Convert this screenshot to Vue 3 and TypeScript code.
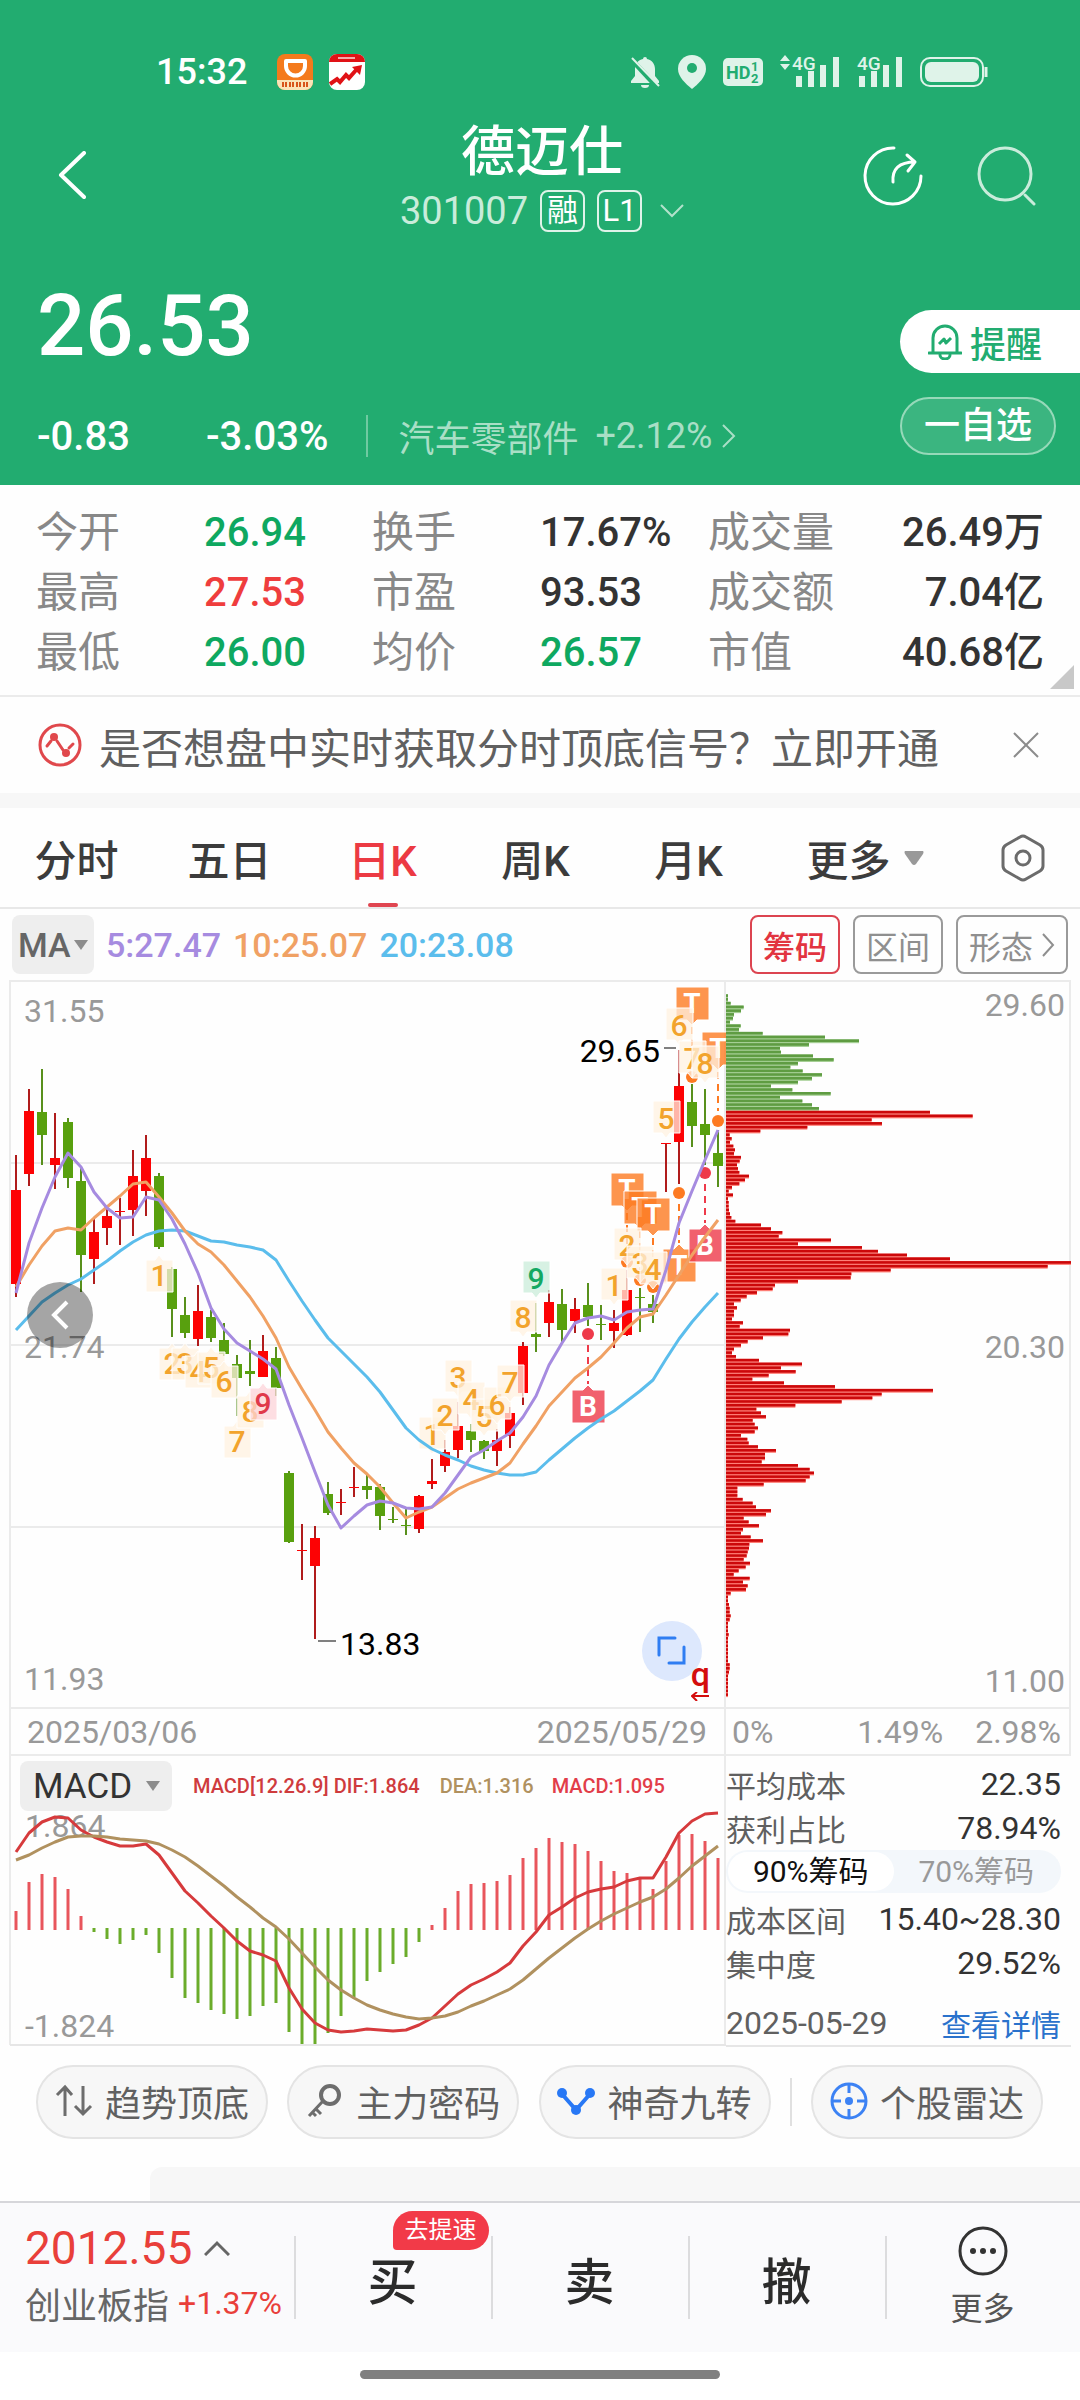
<script setup lang="ts">
import { computed, ref } from 'vue'

type Tone = 'up' | 'down' | 'flat'

interface Quote {
  label: string
  value: string
  tone: Tone
}

/* [high, body top, body bottom, low, rising] in chart units */
type Candle = [number, number, number, number, 0 | 1]

interface Count {
  i: number
  y: number
  n: number
  below?: boolean
  kind?: 'hot' | 'cool'
}

interface Trade {
  i: number
  y: number
  letter: 'T' | 'B'
  below?: boolean
  dot: number
}

const quoteRows: Quote[][] = [
  [
    { label: '今开', value: '26.94', tone: 'down' },
    { label: '换手', value: '17.67%', tone: 'flat' },
    { label: '成交量', value: '26.49万', tone: 'flat' },
  ],
  [
    { label: '最高', value: '27.53', tone: 'up' },
    { label: '市盈', value: '93.53', tone: 'flat' },
    { label: '成交额', value: '7.04亿', tone: 'flat' },
  ],
  [
    { label: '最低', value: '26.00', tone: 'down' },
    { label: '均价', value: '26.57', tone: 'down' },
    { label: '市值', value: '40.68亿', tone: 'flat' },
  ],
]

const periods = ['分时', '五日', '日K', '周K', '月K']
const activePeriod = ref('日K')
const chipRange = ref('90')

const candles: Candle[] = [
  [1155, 1190, 1284, 1297, 1], [1089, 1111, 1174, 1186, 1], [1069, 1112, 1135, 1165, 0],
  [1113, 1158, 1165, 1189, 1], [1118, 1122, 1178, 1188, 0], [1168, 1181, 1255, 1292, 0],
  [1217, 1232, 1259, 1284, 1], [1208, 1216, 1228, 1245, 1], [1198, 1211, 1212, 1245, 1],
  [1150, 1176, 1210, 1236, 1], [1135, 1158, 1191, 1216, 1], [1173, 1176, 1247, 1249, 0],
  [1267, 1269, 1309, 1337, 0], [1297, 1315, 1333, 1338, 0], [1285, 1311, 1339, 1346, 1],
  [1310, 1317, 1338, 1342, 0], [1323, 1340, 1354, 1356, 0], [1355, 1364, 1378, 1416, 0],
  [1340, 1371, 1374, 1386, 0], [1335, 1351, 1377, 1377, 1], [1347, 1358, 1388, 1396, 0],
  [1471, 1473, 1542, 1543, 0], [1524, 1550, 1551, 1580, 1], [1526, 1538, 1566, 1639, 1],
  [1482, 1494, 1513, 1515, 0], [1489, 1502, 1503, 1515, 1], [1467, 1487, 1488, 1497, 1],
  [1475, 1486, 1490, 1499, 0], [1484, 1487, 1516, 1530, 0], [1507, 1519, 1520, 1523, 0],
  [1509, 1525, 1526, 1535, 0], [1495, 1496, 1529, 1533, 1], [1459, 1481, 1484, 1489, 1],
  [1440, 1452, 1466, 1472, 1], [1402, 1426, 1450, 1458, 1], [1424, 1431, 1440, 1452, 0],
  [1440, 1441, 1451, 1459, 0], [1429, 1440, 1451, 1466, 1], [1407, 1413, 1436, 1448, 1],
  [1342, 1346, 1393, 1405, 1], [1303, 1334, 1337, 1352, 0], [1290, 1302, 1323, 1337, 1],
  [1289, 1304, 1330, 1342, 0], [1298, 1309, 1321, 1333, 1], [1283, 1305, 1317, 1326, 0],
  [1305, 1324, 1325, 1340, 0], [1310, 1323, 1331, 1348, 1], [1270, 1290, 1335, 1336, 1],
  [1288, 1297, 1298, 1332, 0], [1295, 1304, 1312, 1323, 0], [1143, 1143, 1144, 1192, 1],
  [1050, 1086, 1142, 1184, 1], [1084, 1102, 1126, 1147, 0], [1089, 1124, 1135, 1165, 0],
  [1130, 1153, 1166, 1187, 0],
]

const ma5 = [
  1293, 1243, 1208, 1177, 1153, 1167, 1192, 1208, 1218, 1217, 1197, 1200, 1219, 1244, 1273, 1308, 1329, 1343, 1351,
  1359, 1369, 1405, 1438, 1472, 1505, 1528, 1516, 1505, 1501, 1503, 1508, 1509, 1507, 1493, 1475, 1457, 1450, 1441,
  1433, 1417, 1396, 1365, 1343, 1323, 1318, 1316, 1320, 1312, 1310, 1309, 1270, 1223, 1191, 1160, 1130,
]
const ma10 = [
  1287, 1265, 1246, 1231, 1228, 1230, 1218, 1207, 1196, 1184, 1182, 1197, 1213, 1231, 1244, 1252, 1265, 1281, 1297,
  1316, 1338, 1367, 1389, 1410, 1432, 1448, 1463, 1474, 1487, 1503, 1518, 1512, 1507, 1498, 1489, 1483, 1478, 1473,
  1463, 1444, 1426, 1406, 1392, 1378, 1368, 1357, 1343, 1328, 1317, 1314, 1295, 1275, 1255, 1237, 1220,
]
const ma20 = [
  1330, 1316, 1302, 1293, 1285, 1279, 1270, 1261, 1251, 1242, 1235, 1231, 1230, 1231, 1236, 1241, 1242, 1245, 1247,
  1250, 1260, 1281, 1301, 1320, 1338, 1351, 1364, 1377, 1392, 1410, 1428, 1440, 1449, 1455, 1460, 1466, 1470, 1473,
  1475, 1475, 1472, 1460, 1449, 1438, 1428, 1419, 1411, 1401, 1391, 1380, 1359, 1339, 1322, 1307, 1293,
]

const counts: Count[] = [
  { i: 11, y: 1259, n: 1, below: true },
  { i: 12, y: 1347, n: 2, below: true },
  { i: 13, y: 1347, n: 3, below: true },
  { i: 14, y: 1355, n: 4, below: true },
  { i: 15, y: 1351, n: 5, below: true },
  { i: 16, y: 1365, n: 6, below: true },
  { i: 17, y: 1425, n: 7, below: true },
  { i: 18, y: 1395, n: 8, below: true },
  { i: 19, y: 1387, n: 9, below: true, kind: 'hot' },
  { i: 32, y: 1417, n: 1 },
  { i: 33, y: 1398, n: 2 },
  { i: 34, y: 1360, n: 3 },
  { i: 35, y: 1382, n: 4 },
  { i: 36, y: 1399, n: 5 },
  { i: 37, y: 1387, n: 6 },
  { i: 38, y: 1365, n: 7 },
  { i: 39, y: 1300, n: 8 },
  { i: 40, y: 1261, n: 9, kind: 'cool' },
  { i: 46, y: 1268, n: 1 },
  { i: 47, y: 1228, n: 2 },
  { i: 48, y: 1246, n: 3 },
  { i: 49, y: 1252, n: 4 },
  { i: 50, y: 1101, n: 5 },
  { i: 51, y: 1008, n: 6 },
  { i: 52, y: 1041, n: 7 },
  { i: 53, y: 1046, n: 8 },
]

const trades: Trade[] = [
  { i: 52, y: 987, letter: 'T', dot: 1077 },
  { i: 54, y: 1032, letter: 'T', dot: 1121 },
  { i: 47, y: 1173, letter: 'T', dot: 1262 },
  { i: 48, y: 1191, letter: 'T', dot: 1280 },
  { i: 49, y: 1198, letter: 'T', dot: 1287 },
  { i: 51, y: 1249, letter: 'T', below: true, dot: 1193 },
  { i: 53, y: 1229, letter: 'B', below: true, dot: 1173 },
  { i: 44, y: 1390, letter: 'B', below: true, dot: 1334 },
]

/* Holding distribution, one value per price step, from the top price down */
const chipLengths = [
  6, 6, 14, 53, 45, 24, 21, 12, 44, 39, 110, 297, 399, 249, 162, 165, 261, 323, 216, 193, 230, 288, 258, 216, 135, 199,
  314, 162, 229, 258, 279, 612, 740, 437, 468, 244, 103, 11, 17, 12, 22, 27, 24, 45, 41, 33, 36, 40, 69, 57, 40, 18, 8,
  21, 6, 8, 8, 9, 12, 16, 28, 105, 135, 169, 158, 315, 216, 408, 456, 543, 672, 1035, 965, 494, 376, 374, 216, 147, 140,
  93, 62, 44, 24, 33, 24, 24, 18, 51, 41, 192, 187, 111, 65, 45, 24, 18, 30, 99, 228, 165, 209, 128, 79, 174, 327, 621,
  467, 439, 347, 208, 91, 105, 120, 80, 86, 96, 86, 45, 64, 68, 96, 150, 117, 117, 107, 216, 251, 264, 251, 239, 113,
  34, 34, 34, 50, 80, 90, 135, 120, 53, 68, 99, 51, 45, 74, 111, 70, 69, 65, 62, 53, 72, 59, 38, 23, 71, 51, 65, 60,
  14, 6, 6, 9, 11, 11, 14, 11, 6, 6, 6, 8, 6, 6, 6, 6, 6, 6, 6, 11, 11, 9, 6, 6, 6, 6, 6, 6,
]
const profitSplit = 31

const macdEnds = [
  1911, 1882, 1874, 1877, 1889, 1916, 1932, 1939, 1944, 1940, 1935, 1953, 1978, 1998, 2003, 2010, 2014, 2019, 2016,
  2006, 2003, 2032, 2045, 2045, 2033, 2016, 1997, 1981, 1972, 1964, 1957, 1942, 1925, 1908, 1891, 1884, 1883, 1881,
  1875, 1858, 1848, 1838, 1842, 1844, 1851, 1861, 1871, 1873, 1877, 1889, 1861, 1835, 1834, 1841, 1858,
]
const dif = [
  1852, 1833, 1822, 1817, 1818, 1830, 1837, 1842, 1846, 1846, 1844, 1855, 1873, 1891, 1903, 1916, 1928, 1941, 1951,
  1955, 1961, 1988, 2009, 2023, 2030, 2032, 2031, 2029, 2030, 2031, 2030, 2025, 2018, 2006, 1994, 1985, 1979, 1972,
  1963, 1946, 1932, 1915, 1907, 1898, 1892, 1889, 1887, 1881, 1878, 1878, 1857, 1833, 1821, 1814, 1813,
]
const dea = [
  1860, 1855, 1848, 1842, 1837, 1836, 1836, 1837, 1839, 1840, 1841, 1844, 1850, 1857, 1866, 1876, 1886, 1897, 1907,
  1918, 1927, 1939, 1953, 1967, 1980, 1990, 1998, 2005, 2010, 2014, 2017, 2019, 2018, 2016, 2012, 2006, 2001, 1995,
  1989, 1980, 1969, 1958, 1948, 1938, 1929, 1921, 1914, 1908, 1902, 1897, 1889, 1878, 1866, 1856, 1846,
]

const xAt = (i: number): number => 16 + 13 * i
const toPoints = (values: number[]): string => values.map((y, i) => `${xAt(i)},${y}`).join(' ')

const averages = computed(() => [
  { color: '#5bbdec', points: toPoints(ma20) },
  { color: '#f0a164', points: toPoints(ma10) },
  { color: '#a68be0', points: toPoints(ma5) },
])

const chips = computed(() =>
  chipLengths.map((length, k) => ({
    y: 994.3 + k * 3.758,
    width: length / 3,
    gain: k < profitSplit,
  })),
)

const countPath = (c: Count): string => {
  const x = xAt(c.i)
  return c.below
    ? `M${x - 13} ${c.y + 1}h9l4 -5l4 5h10v32h-27z`
    : `M${x - 13} ${c.y}h27v32h-10l-4 5l-4 -5h-9z`
}
const tradePath = (t: Trade): string => {
  const x = xAt(t.i)
  return t.below
    ? `M${x - 16} ${t.y}h11l5 -5l5 5h12v33h-33z`
    : `M${x - 16} ${t.y}h33v33h-12l-5 5l-5 -5h-11z`
}
</script>

<template>
  <div class="screen">
    <header class="top">
      <div class="status">
        <div class="status-left">
          <span class="clock">15:32</span>
          <svg class="app" viewBox="0 0 36 36" aria-hidden="true">
            <rect width="36" height="36" rx="8" fill="#f47a1c" />
            <path d="M9 7h19v5a9 9 0 0 1 -19 0z" fill="none" stroke="#fff" stroke-width="4" stroke-linejoin="round" />
            <path d="M0 26h36v2a8 8 0 0 1 -8 8h-20a8 8 0 0 1 -8 -8z" fill="#fbe3b8" />
            <path d="M6 28v5M9 28v5M13 28v5M16 28v5M20 28v5M23 28v5M27 28v5M30 28v5" stroke="#d8541a" stroke-width="2" fill="none" />
          </svg>
          <svg class="app" viewBox="0 0 36 36" aria-hidden="true">
            <rect width="36" height="36" rx="8" fill="#fff" />
            <path d="M0 8a8 8 0 0 1 8 -8h20a8 8 0 0 1 8 8z" fill="#e01216" />
            <path d="M9 4h17" stroke="#f7a9a9" stroke-width="2" />
            <path d="M1 30l7 -5l3 3l6 -7l3 3l8 -9" fill="none" stroke="#e01216" stroke-width="4" />
            <path d="M33 11l-10 2l8 8z" fill="#e01216" />
          </svg>
        </div>
        <div class="status-right">
          <svg width="32" height="34" viewBox="0 0 32 34" aria-hidden="true">
            <path d="M16 2a2 2 0 0 1 2 2c5 1 8 5 8 10v7l4 5v2H2v-2l4 -5v-7c0 -5 3 -9 8 -10a2 2 0 0 1 2 -2zM12 30h8a4 3 0 0 1 -8 0z" fill="#dff3e9" />
            <path d="M3 5L28 32" stroke="#22ac70" stroke-width="5" />
            <path d="M3 3L30 31" stroke="#dff3e9" stroke-width="2" />
          </svg>
          <svg width="28" height="34" viewBox="0 0 28 34" aria-hidden="true">
            <path d="M14 0a14 14 0 0 1 14 14c0 8 -8 15 -14 20c-6 -5 -14 -12 -14 -20a14 14 0 0 1 14 -14z" fill="#dff3e9" />
            <circle cx="14" cy="13" r="5" fill="#22ac70" />
          </svg>
          <svg width="40" height="28" viewBox="0 0 40 28" aria-hidden="true">
            <rect width="40" height="28" rx="5" fill="#dff3e9" />
            <text x="3" y="21" class="hd">HD</text>
            <text x="28" y="13" class="hd-small">1</text>
            <text x="28" y="25" class="hd-small">2</text>
          </svg>
          <svg class="signal" width="60" height="34" viewBox="0 0 60 34" aria-hidden="true">
            <path d="M0 6l5 -6l5 6zM0 9l5 6l5 -6z" fill="#dff3e9" />
            <text x="12" y="15" class="net">4G</text>
            <path d="M19 21v11M31 16v16M43 10v22M56 2v30" stroke="#dff3e9" stroke-width="6" />
          </svg>
          <svg class="signal" width="46" height="34" viewBox="0 0 46 34" aria-hidden="true">
            <text x="0" y="15" class="net">4G</text>
            <path d="M5 21v11M17 16v16M29 10v22M42 2v30" stroke="#dff3e9" stroke-width="6" />
          </svg>
          <svg width="68" height="30" viewBox="0 0 68 30" aria-hidden="true">
            <rect x="1" y="1" width="62" height="28" rx="9" fill="none" stroke="#dff3e9" stroke-width="2" />
            <rect x="5" y="5" width="54" height="20" rx="6" fill="#dff3e9" />
            <path d="M66 10v10" stroke="#dff3e9" stroke-width="3" />
          </svg>
        </div>
      </div>

      <div class="titlebar">
        <button class="plain back" type="button" aria-label="返回">
          <svg width="28" height="48" viewBox="0 0 28 48" aria-hidden="true">
            <path d="M26 2L3 24L26 46" fill="none" stroke="#fff" stroke-width="4" stroke-linecap="round" stroke-linejoin="round" />
          </svg>
        </button>
        <div class="titles">
          <h1>德迈仕</h1>
          <div class="code">
            <span class="code-no">301007</span>
            <span class="mark">融</span>
            <span class="mark">L1</span>
            <svg width="24" height="14" viewBox="0 0 24 14" aria-hidden="true">
              <path d="M1 1L12 12L23 1" fill="none" stroke="#b3e2cb" stroke-width="2" />
            </svg>
          </div>
        </div>
        <div class="tools">
          <button class="plain" type="button" aria-label="分享">
            <svg width="60" height="60" viewBox="0 0 60 60" aria-hidden="true">
              <path d="M31 2A28 28 0 1 0 58 30" fill="none" stroke="#fff" stroke-width="3" stroke-linecap="round" />
              <path d="M30 36C29 23 36 16 52 16M44 9L52 16L45 25" fill="none" stroke="#fff" stroke-width="3" stroke-linecap="round" stroke-linejoin="round" />
            </svg>
          </button>
          <button class="plain" type="button" aria-label="搜索">
            <svg width="60" height="60" viewBox="0 0 60 60" aria-hidden="true">
              <circle cx="29" cy="28" r="26" fill="none" stroke="#c9ecdb" stroke-width="3" />
              <path d="M49 49L58 58" stroke="#c9ecdb" stroke-width="3" stroke-linecap="round" />
            </svg>
          </button>
        </div>
      </div>

      <div class="price-area">
        <div class="prices">
          <strong class="price">26.53</strong>
          <div class="change">
            <span class="delta">-0.83</span>
            <span>-3.03%</span>
            <a class="sector" href="#">
              <span>汽车零部件</span>
              <span class="sector-rate">+2.12%</span>
              <svg width="14" height="24" viewBox="0 0 14 24" aria-hidden="true">
                <path d="M1 1L12 12L1 23" fill="none" stroke="#a9dfc6" stroke-width="2" />
              </svg>
            </a>
          </div>
        </div>
        <div class="actions">
          <button class="remind" type="button">
            <svg width="34" height="36" viewBox="0 0 34 36" aria-hidden="true">
              <path d="M5 28V14a12 12 0 0 1 24 0V28M1 29h32M12 31a5 4 0 0 0 10 0" fill="none" stroke="#22ac70" stroke-width="3" stroke-linecap="round" />
              <path d="M11 20l5 -5l2 4l5 -5" fill="none" stroke="#22ac70" stroke-width="3" stroke-linejoin="round" />
            </svg>
            提醒
          </button>
          <button class="favor" type="button">一自选</button>
        </div>
      </div>
    </header>

    <section class="quotes">
      <table>
        <tbody>
          <tr v-for="(row, r) in quoteRows" :key="r">
            <template v-for="q in row" :key="q.label">
              <th scope="row">{{ q.label }}</th>
              <td :class="q.tone">{{ q.value }}</td>
            </template>
          </tr>
        </tbody>
      </table>
      <svg class="corner" width="24" height="24" viewBox="0 0 24 24" aria-hidden="true">
        <path d="M24 0V24H0z" fill="#c8c8c8" />
      </svg>
    </section>

    <section class="notice">
      <svg width="44" height="44" viewBox="0 0 44 44" aria-hidden="true">
        <circle cx="22" cy="22" r="20" fill="none" stroke="#e0484c" stroke-width="3" />
        <path d="M9 23L13 18M19 18L25 27M31 25L35 21" fill="none" stroke="#e0484c" stroke-width="3" stroke-linecap="round" />
        <circle cx="16" cy="14" r="4" fill="#e0484c" />
        <circle cx="28" cy="30" r="4" fill="#e0484c" />
      </svg>
      <p>是否想盘中实时获取分时顶底信号？立即开通</p>
      <button class="plain" type="button" aria-label="关闭">
        <svg width="28" height="28" viewBox="0 0 28 28" aria-hidden="true">
          <path d="M2 2L26 26M26 2L2 26" stroke="#8c8c8c" stroke-width="2" />
        </svg>
      </button>
    </section>

    <nav class="periods">
      <button
        v-for="p in periods"
        :key="p"
        type="button"
        class="period"
        :class="{ on: p === activePeriod }"
        @click="activePeriod = p"
      >
        {{ p }}
      </button>
      <button type="button" class="period more-periods">
        更多
        <svg width="20" height="14" viewBox="0 0 20 14" aria-hidden="true"><path d="M1 0h18q1 1 0 3l-7 10q-2 2 -4 0l-7 -10q-1 -2 0 -3z" fill="#999" /></svg>
      </button>
      <button type="button" class="period settings" aria-label="设置">
        <svg width="44" height="48" viewBox="0 0 44 48" aria-hidden="true">
          <path d="M19 3q3 -2 6 0l14 8q3 2 3 5v16q0 3 -3 5l-14 8q-3 2 -6 0l-14 -8q-3 -2 -3 -5v-16q0 -3 3 -5z" fill="none" stroke="#6b6b6b" stroke-width="3" />
          <circle cx="22" cy="24" r="7" fill="none" stroke="#6b6b6b" stroke-width="3" />
        </svg>
      </button>
    </nav>

    <div class="ma-row">
      <div class="picker ma-picker">
        <select aria-label="主图指标">
          <option>MA</option>
        </select>
        <svg width="14" height="10" viewBox="0 0 14 10" aria-hidden="true"><path d="M0 0h14L7 10z" fill="#8c8c8c" /></svg>
      </div>
      <span class="ma5">5:27.47</span>
      <span class="ma10">10:25.07</span>
      <span class="ma20">20:23.08</span>
      <div class="modes">
        <button type="button" class="mode on">筹码</button>
        <button type="button" class="mode">区间</button>
        <button type="button" class="mode">
          形态
          <svg width="13" height="24" viewBox="0 0 13 24" aria-hidden="true">
            <path d="M1 1L11 12L1 23" fill="none" stroke="#8f8f8f" stroke-width="2" />
          </svg>
        </button>
      </div>
    </div>

    <section class="charts">
      <div class="left">
        <div class="plot">
          <svg class="canvas" viewBox="9 980 717 729" role="img" aria-label="日K线图">
            <g stroke="#ebebeb" stroke-width="2">
              <path d="M10 981H726M10 1163H726M10 1345H726M10 1527H726M10 1708H726M10 980V1709M725 980V1709" />
            </g>
            <g v-for="(c, i) in candles" :key="i" :fill="c[4] ? '#fd0204' : '#58a00e'">
              <rect :x="xAt(i) - 1" :y="c[0]" width="2" :height="c[3] - c[0]" :fill="c[4] ? '#b01c1c' : '#58901c'" />
              <rect :x="xAt(i) - 5" :y="c[1]" width="10" :height="c[2] - c[1]" />
            </g>

            <g v-for="t in trades" :key="'t' + t.i" :class="t.letter === 'T' ? 'mark-t' : 'mark-b'">
              <path
                class="lead"
                :d="`M${xAt(t.i)} ${t.below ? t.dot + 11 : t.y + 40}V${t.below ? t.y - 6 : t.dot - 10}`"
              />
              <circle :cx="xAt(t.i)" :cy="t.dot" r="6" />
              <path class="flag" :d="tradePath(t)" />
              <text :x="xAt(t.i)" :y="t.y + 26">{{ t.letter }}</text>
            </g>

            <g v-for="c in counts" :key="'c' + c.i" class="count" :class="c.kind">
              <path :d="countPath(c)" />
              <text :x="xAt(c.i)" :y="c.below ? c.y + 27 : c.y + 28">{{ c.n }}</text>
            </g>

            <polyline
              v-for="line in averages"
              :key="line.color"
              :points="line.points"
              :stroke="line.color"
              fill="none"
              stroke-width="3"
              stroke-linejoin="round"
            />

            <g class="extreme">
              <path d="M664 1048h12M318 1641h18" stroke="#808080" stroke-width="2" />
              <text x="660" y="1062" text-anchor="end">29.65</text>
              <text x="340" y="1655">13.83</text>
            </g>
            <g class="scale">
              <text x="24" y="1022">31.55</text>
              <text x="24" y="1358">21.74</text>
              <text x="24" y="1690">11.93</text>
            </g>
          </svg>
          <button class="float prev" type="button" aria-label="收起">
            <svg width="18" height="30" viewBox="0 0 18 30" aria-hidden="true">
              <path d="M16 2L3 15L16 28" fill="none" stroke="#fff" stroke-width="4" />
            </svg>
          </button>
          <button class="float expand" type="button" aria-label="全屏">
            <svg width="30" height="30" viewBox="0 0 30 30" aria-hidden="true">
              <path d="M2 19V2H18M12 27H27V11" fill="none" stroke="#2f7df2" stroke-width="3" stroke-linecap="round" />
            </svg>
          </button>
          <span class="rights">q<svg width="18" height="9" viewBox="0 0 18 9" aria-hidden="true"><path d="M18 4H2M6 0L1 4L6 9" fill="none" stroke="#d40d0d" stroke-width="2" /></svg></span>
        </div>
        <div class="axis dates">
          <span>2025/03/06</span>
          <span>2025/05/29</span>
        </div>
        <div class="macd">
          <svg class="canvas" viewBox="9 1756 717 290" role="img" aria-label="MACD">
            <g class="scale">
              <text x="25" y="1837">1.864</text>
              <text x="25" y="2037">-1.824</text>
            </g>
            <g stroke-width="3">
              <path
                v-for="(y, i) in macdEnds"
                :key="i"
                :d="`M${xAt(i)} ${y < 1929 ? 1930 : 1928}V${y}`"
                :stroke="y < 1929 ? '#e8555c' : '#6bac2a'"
              />
            </g>
            <polyline :points="toPoints(dif)" fill="none" stroke="#d63a3c" stroke-width="3" stroke-linejoin="round" />
            <polyline :points="toPoints(dea)" fill="none" stroke="#b0915f" stroke-width="3" stroke-linejoin="round" />
            <path d="M10 1756V2045M725 1756V2045" stroke="#ebebeb" stroke-width="2" />
            <path d="M10 2045H726" stroke="#e6e6e6" stroke-width="2" />
          </svg>
          <div class="macd-head">
            <div class="picker macd-picker">
              <select aria-label="副图指标">
                <option>MACD</option>
              </select>
              <svg width="14" height="10" viewBox="0 0 14 10" aria-hidden="true"><path d="M0 0h14L7 10z" fill="#8c8c8c" /></svg>
            </div>
            <span class="dif">MACD[12.26.9] DIF:1.864</span>
            <span class="dea">DEA:1.316</span>
            <span class="bar">MACD:1.095</span>
          </div>
        </div>
      </div>

      <div class="right">
        <svg class="canvas" viewBox="726 980 345 729" role="img" aria-label="筹码分布">
          <path d="M726 981H1071M726 1708H1071M1070 980V1709" stroke="#ebebeb" stroke-width="2" />
          <g v-for="(c, k) in chips" :key="k">
            <rect x="726" :y="c.y" :width="c.width" height="3.8" :fill="c.gain ? '#a5cf94' : '#ff8078'" />
            <rect x="726" :y="c.y" :width="c.width" height="2.6" :fill="c.gain ? '#5f9c42' : '#cc080a'" />
          </g>
          <g class="scale" text-anchor="end">
            <text x="1065" y="1016">29.60</text>
            <text x="1065" y="1358">20.30</text>
            <text x="1065" y="1692">11.00</text>
          </g>
        </svg>
        <div class="axis percents">
          <span>0%</span>
          <span>1.49%</span>
          <span>2.98%</span>
        </div>
        <div class="holding">
          <div class="pair"><span>平均成本</span><b>22.35</b></div>
          <div class="pair"><span>获利占比</span><b>78.94%</b></div>
          <div class="switch">
            <button type="button" :class="{ on: chipRange === '90' }" @click="chipRange = '90'">90%筹码</button>
            <button type="button" :class="{ on: chipRange === '70' }" @click="chipRange = '70'">70%筹码</button>
          </div>
          <div class="pair"><span>成本区间</span><b>15.40~28.30</b></div>
          <div class="pair"><span>集中度</span><b>29.52%</b></div>
          <div class="pair last"><time>2025-05-29</time><a href="#">查看详情</a></div>
        </div>
      </div>
    </section>

    <div class="features">
      <button type="button" class="feature">
        <svg width="38" height="34" viewBox="0 0 38 34" aria-hidden="true">
          <path d="M10 32V3M2 11L10 3L17 11M28 2V30M20 22L28 30L36 22" fill="none" stroke="#6d6d6d" stroke-width="3" />
        </svg>
        趋势顶底
      </button>
      <button type="button" class="feature">
        <svg width="38" height="36" viewBox="0 0 38 36" aria-hidden="true">
          <circle cx="24" cy="12" r="9" fill="none" stroke="#6d6d6d" stroke-width="4" />
          <path d="M17 18L3 33M10 26L15 31M6 29L10 33" fill="none" stroke="#6d6d6d" stroke-width="3" />
        </svg>
        主力密码
      </button>
      <button type="button" class="feature">
        <svg width="38" height="30" viewBox="0 0 38 30" aria-hidden="true">
          <path d="M5 8L19 24L33 8" fill="none" stroke="#2878f5" stroke-width="4" />
          <circle cx="5" cy="7" r="5" fill="#2878f5" />
          <circle cx="33" cy="7" r="5" fill="#2878f5" />
          <circle cx="19" cy="24" r="5" fill="#2878f5" />
        </svg>
        神奇九转
      </button>
      <i class="split"></i>
      <button type="button" class="feature">
        <svg width="38" height="38" viewBox="0 0 38 38" aria-hidden="true">
          <circle cx="19" cy="19" r="17" fill="none" stroke="#3c82f4" stroke-width="3" />
          <path d="M19 2V11M19 27V36M2 19H11M27 19H36" stroke="#3c82f4" stroke-width="3" />
          <circle cx="19" cy="19" r="4" fill="#3c82f4" />
        </svg>
        个股雷达
      </button>
    </div>

    <div class="peek"></div>

    <footer class="trade">
      <div class="index">
        <div class="index-value">
          2012.55
          <svg width="26" height="16" viewBox="0 0 26 16" aria-hidden="true">
            <path d="M1 15L13 3L25 15" fill="none" stroke="#666" stroke-width="3" />
          </svg>
        </div>
        <div class="index-name">创业板指 <span>+1.37%</span></div>
      </div>
      <button type="button" class="deal">买<span class="tip">去提速</span></button>
      <button type="button" class="deal">卖</button>
      <button type="button" class="deal">撤</button>
      <button type="button" class="deal others">
        <svg width="52" height="52" viewBox="0 0 52 52" aria-hidden="true">
          <circle cx="26" cy="26" r="23" fill="none" stroke="#333" stroke-width="3" />
          <circle cx="16" cy="26" r="3" fill="#333" />
          <circle cx="26" cy="26" r="3" fill="#333" />
          <circle cx="36" cy="26" r="3" fill="#333" />
        </svg>
        更多
      </button>
    </footer>
    <div class="home"><i></i></div>
  </div>
</template>

<style>
body {
  background: #fff;
}
</style>

<style scoped>
.screen,
.screen * {
  box-sizing: border-box;
}
.screen {
  width: 100%;
  overflow: hidden;
  color: #333;
  background: #fefefe;
  font-family: Roboto, "Noto Sans CJK SC", sans-serif;
  font-size: 32px;
}
button,
select {
  margin: 0;
  padding: 0;
  border: 0;
  background: none;
  color: inherit;
  font: inherit;
}
svg {
  display: block;
  flex: none;
}
a {
  color: inherit;
  text-decoration: none;
}
.plain {
  display: block;
}

/* header */
.top {
  height: 485px;
  color: #fff;
  background: #22ac70;
}
.status {
  display: flex;
  justify-content: space-between;
  align-items: center;
  height: 120px;
  padding: 24px 92px 0 156px;
}
.status-left,
.status-right {
  display: flex;
  align-items: center;
  gap: 16px;
}
.status-right {
  gap: 17px;
}
.clock {
  margin-right: 14px;
  font-size: 36px;
  font-weight: 500;
}
.app {
  width: 36px;
  height: 36px;
}
.signal {
  overflow: visible;
}
.hd {
  fill: #22ac70;
  font-size: 18px;
  font-weight: 700;
}
.hd-small {
  fill: #22ac70;
  font-size: 13px;
  font-weight: 700;
}
.net {
  fill: #dff3e9;
  font-size: 19px;
  font-weight: 500;
}
.titlebar {
  display: grid;
  grid-template-columns: 1fr auto 1fr;
  align-items: start;
  height: 120px;
  padding: 0 44px 0 58px;
}
.back {
  margin-top: 31px;
}
.titles {
  margin-right: 10px;
  text-align: center;
}
h1 {
  margin: 0;
  font-size: 54px;
  line-height: 66px;
  font-weight: 500;
}
.code {
  display: flex;
  align-items: center;
  gap: 12px;
  height: 50px;
}
.code-no {
  color: #c9ecdb;
  font-size: 38px;
}
.mark {
  width: 45px;
  height: 42px;
  border: 2px solid #dff3e9;
  border-radius: 8px;
  font-size: 31px;
  line-height: 38px;
}
.code svg {
  margin-left: 6px;
}
.tools {
  display: flex;
  justify-content: flex-end;
  gap: 53px;
  margin-top: 26px;
}
.price-area {
  display: flex;
  justify-content: space-between;
  padding-left: 37px;
}
.price {
  display: block;
  margin-top: 36px;
  font-size: 85px;
  line-height: 100px;
  font-weight: 500;
}
.change {
  display: flex;
  align-items: center;
  height: 50px;
  margin-top: 35px;
  font-size: 40px;
  font-weight: 500;
}
.delta {
  width: 169px;
}
.sector {
  display: flex;
  align-items: center;
  height: 42px;
  margin-left: 38px;
  padding-left: 30px;
  border-left: 2px solid #6fcaa1;
  color: #a9dfc6;
  font-size: 36px;
  font-weight: 400;
}
.sector-rate {
  margin: 0 10px 0 17px;
}
.actions {
  display: flex;
  flex-direction: column;
  gap: 24px;
  width: 180px;
  padding-top: 70px;
  font-size: 36px;
  font-weight: 500;
}
.remind {
  display: flex;
  align-items: center;
  gap: 8px;
  height: 63px;
  padding-left: 28px;
  border-radius: 32px 0 0 32px;
  background: #fff;
  color: #22ac70;
  white-space: nowrap;
}
.favor {
  width: 156px;
  height: 58px;
  border: 2px solid #96d9b9;
  border-radius: 29px;
  background: #3bb580;
  line-height: 54px;
}

/* quotes */
.quotes {
  position: relative;
  height: 212px;
  padding: 18px 36px 0;
  border-bottom: 2px solid #ebebeb;
}
table {
  width: 100%;
  border-collapse: collapse;
  table-layout: fixed;
}
th,
td {
  height: 60px;
  padding: 0;
  line-height: 60px;
  text-align: left;
  white-space: nowrap;
}
th {
  color: #888;
  font-size: 42px;
  font-weight: 400;
}
td {
  font-size: 40px;
  font-weight: 500;
}
td:last-child {
  text-align: right;
}
.up {
  color: #ef3d3d;
}
.down {
  color: #0ea860;
}
.corner {
  position: absolute;
  right: 6px;
  bottom: 6px;
}

/* notice */
.notice {
  display: flex;
  align-items: center;
  height: 111px;
  padding: 0 40px 0 38px;
  border-bottom: 15px solid #f7f7f7;
}
.notice p {
  flex: 1;
  margin: 0 0 0 17px;
  color: #606060;
  font-size: 42px;
  white-space: nowrap;
}

/* periods */
.periods {
  display: flex;
  height: 101px;
  border-bottom: 2px solid #e8e8e8;
}
.period {
  position: relative;
  display: flex;
  flex: 153;
  align-items: center;
  justify-content: center;
  color: #3c3c3c;
  font-size: 42px;
  font-weight: 500;
}
.period.on {
  color: #ec3a43;
}
.period.on::after {
  content: "";
  position: absolute;
  bottom: 0;
  left: 50%;
  width: 30px;
  height: 4px;
  margin-left: -15px;
  border-radius: 2px;
  background: #e04550;
}
.more-periods {
  flex: 200;
  gap: 13px;
}
.settings {
  flex: 115;
}

/* moving averages */
.ma-row {
  display: flex;
  align-items: center;
  gap: 12px;
  height: 71px;
  padding: 0 12px;
  font-size: 34px;
  font-weight: 500;
}
.picker {
  position: relative;
  border-radius: 8px;
  background: #eee;
}
.picker select {
  width: 100%;
  height: 100%;
  appearance: none;
}
.picker svg {
  position: absolute;
  top: 50%;
  margin-top: -5px;
  pointer-events: none;
}
.ma-picker {
  width: 82px;
  height: 59px;
}
.ma-picker select {
  padding-left: 6px;
  color: #666;
  font-size: 34px;
}
.ma-picker svg {
  right: 6px;
}
.ma5 {
  color: #a68be0;
}
.ma10 {
  color: #f0a164;
}
.ma20 {
  color: #5bbdec;
}
.modes {
  display: flex;
  gap: 13px;
  margin-left: auto;
}
.mode {
  display: flex;
  align-items: center;
  gap: 9px;
  height: 59px;
  padding: 0 11px;
  border: 2px solid #9a9a9a;
  border-radius: 8px;
  color: #8f8f8f;
  font-size: 32px;
  font-weight: 400;
}
.mode.on {
  border-color: #dc4450;
  color: #e23440;
  font-weight: 500;
}

/* charts */
.charts {
  display: grid;
  grid-template-columns: 717fr 345fr;
  margin: 0 9px;
}
.canvas {
  width: 100%;
  height: auto;
}
.plot,
.macd {
  position: relative;
}
.scale text {
  fill: #999;
  font-size: 32px;
}
.extreme text {
  fill: #000;
  font-size: 32px;
}
.mark-t {
  fill: #fd7a22;
  stroke: #fd7a22;
}
.mark-b {
  fill: #ee3a4a;
  stroke: #ee3a4a;
}
.mark-t circle,
.mark-b circle {
  stroke: none;
}
.lead {
  fill: none;
  stroke-width: 2;
  stroke-dasharray: 7 5;
}
.flag {
  fill-opacity: 0.8;
  stroke: #fff;
  stroke-width: 1;
}
.mark-t text,
.mark-b text {
  fill: #fff;
  stroke: none;
  font-size: 28px;
  font-weight: 700;
  text-anchor: middle;
}
.count path {
  fill: #fff1e0;
  fill-opacity: 0.75;
  stroke: #fff;
  stroke-width: 1;
}
.count text {
  fill: #f2a32c;
  font-size: 30px;
  font-weight: 500;
  text-anchor: middle;
}
.count.hot path {
  fill: #fcd3d8;
}
.count.hot text {
  fill: #e0384a;
}
.count.cool path {
  fill: #c9ecd9;
}
.count.cool text {
  fill: #14a862;
}
.float {
  position: absolute;
  display: flex;
  align-items: center;
  justify-content: center;
  border-radius: 50%;
}
.prev {
  top: 302px;
  left: 18px;
  width: 66px;
  height: 66px;
  background: rgba(0, 0, 0, 0.35);
}
.expand {
  right: 24px;
  bottom: 28px;
  width: 60px;
  height: 60px;
  background: #dde8fd;
}
.rights {
  position: absolute;
  right: 16px;
  bottom: 8px;
  color: #d40d0d;
  font-size: 34px;
  font-weight: 500;
  line-height: 36px;
}
.axis {
  display: flex;
  justify-content: space-between;
  align-items: center;
  height: 47px;
  border-right: 2px solid #ebebeb;
  border-bottom: 2px solid #ebebeb;
  color: #999;
}
.dates {
  padding: 0 17px 0 16px;
  border-left: 2px solid #ebebeb;
}
.percents {
  padding: 0 8px 0 6px;
}
.percents span:first-child {
  margin-right: auto;
}
.percents span:last-child {
  margin-left: 32px;
}
.macd-head {
  position: absolute;
  top: 5px;
  left: 11px;
  display: flex;
  align-items: center;
  font-size: 20px;
  white-space: nowrap;
}
.macd-picker {
  width: 152px;
  height: 50px;
}
.macd-picker select {
  padding-left: 13px;
  color: #333;
  font-size: 35px;
}
.macd-picker svg {
  right: 12px;
}
.dif {
  margin-left: 21px;
  color: #cf3b3d;
  font-weight: 500;
}
.dea {
  margin-left: 20px;
  color: #b0915f;
  font-weight: 500;
}
.bar {
  margin-left: 18px;
  color: #e23d49;
  font-weight: 500;
}

/* holding summary */
.right {
  display: flex;
  flex-direction: column;
}
.holding {
  flex: 1;
  padding: 6px 10px 0 0;
  border-bottom: 2px solid #e6e6e6;
}
.pair {
  display: flex;
  justify-content: space-between;
  align-items: center;
  height: 44px;
  color: #606060;
  font-size: 30px;
  white-space: nowrap;
}
.pair b {
  color: #333;
  font-size: 32px;
  font-weight: 400;
}
.pair time {
  font-size: 32px;
}
.pair a {
  color: #2a72cc;
}
.last {
  margin-top: 16px;
}
.switch {
  display: flex;
  height: 43px;
  margin-bottom: 4px;
  padding: 2px;
  border-radius: 22px;
  background: #f3f7fb;
}
.switch button {
  flex: 1;
  border-radius: 20px;
  color: #999;
  font-size: 30px;
  line-height: 39px;
  white-space: nowrap;
}
.switch .on {
  background: #fff;
  color: #111;
}

/* features */
.features {
  display: flex;
  align-items: center;
  justify-content: space-between;
  padding: 18px 37px 28px 36px;
}
.feature {
  display: flex;
  flex: none;
  align-items: center;
  justify-content: center;
  gap: 12px;
  width: 232px;
  height: 74px;
  padding-bottom: 3px;
  border: 2px solid #e4e4e4;
  border-radius: 37px;
  background: #f7f7f7;
  color: #606060;
  font-size: 36px;
  white-space: nowrap;
}
.split {
  width: 2px;
  height: 48px;
  background: #e0e0e0;
}
.peek {
  height: 34px;
  margin-left: 150px;
  border-radius: 12px 0 0 0;
  background: #f7f7f7;
}

/* trade bar */
.trade {
  display: grid;
  grid-template-columns: 294fr 197fr 197fr 197fr 195fr;
  height: 151px;
  border-top: 2px solid #d6d6da;
  background: #fafafc;
}
.index {
  min-width: 0;
  padding: 18px 0 0 25px;
  white-space: nowrap;
}
.index-value {
  display: flex;
  align-items: center;
  gap: 12px;
  height: 54px;
  color: #e93f3a;
  font-size: 46px;
}
.index-name {
  display: flex;
  align-items: center;
  gap: 9px;
  height: 56px;
  color: #666;
  font-size: 36px;
}
.index-name span {
  color: #e93f3a;
  font-size: 32px;
}
.deal {
  position: relative;
  display: flex;
  align-items: center;
  justify-content: center;
  color: #2b2b2b;
  font-size: 50px;
  font-weight: 500;
}
.deal::before {
  content: "";
  position: absolute;
  top: 33px;
  bottom: 33px;
  left: 0;
  width: 2px;
  background: #dcdcde;
}
.tip {
  position: absolute;
  top: 8px;
  left: 50%;
  padding: 0 12px;
  border-radius: 20px 20px 20px 4px;
  background: #f23a48;
  color: #fff;
  font-size: 24px;
  line-height: 39px;
  font-weight: 400;
  white-space: nowrap;
}
.others {
  flex-direction: column;
  gap: 10px;
  color: #555;
  font-size: 32px;
  line-height: 44px;
  font-weight: 400;
}
.home {
  display: flex;
  justify-content: center;
  align-items: center;
  height: 49px;
  padding-bottom: 4px;
  background: #fff;
}
.home i {
  width: 360px;
  height: 9px;
  border-radius: 5px;
  background: #808080;
}
</style>
